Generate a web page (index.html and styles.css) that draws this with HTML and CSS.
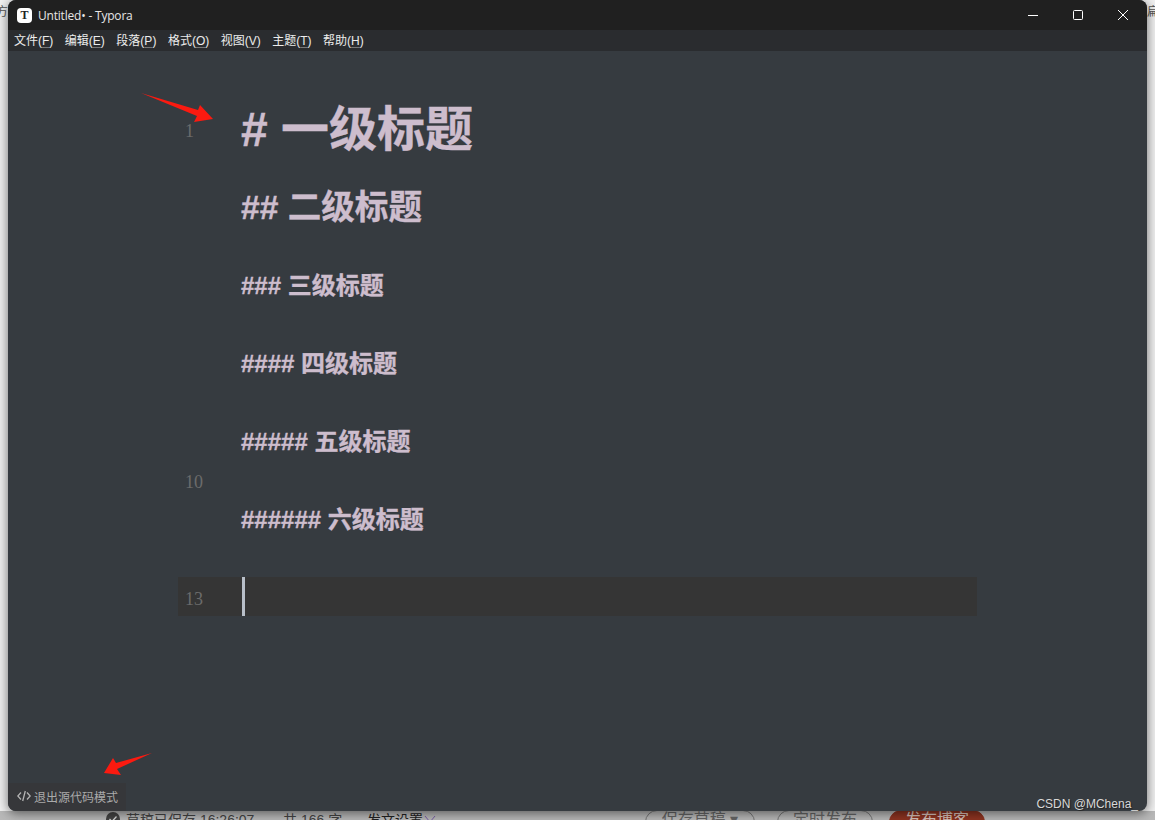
FILE: index.html
```html
<!DOCTYPE html>
<html lang="zh-CN">
<head>
<meta charset="utf-8">
<title>Untitled• - Typora</title>
<link rel="stylesheet" href="styles.css">
</head>
<body>
<div class="desk">
  <div class="back-top">
    <span class="back-left">方</span>
    <span class="back-right">扁</span>
  </div>
  <div class="back-foot">
    <span class="status-check"><svg width="14" height="14" viewBox="0 0 14 14"><path d="M3.5 7l2.5 2.5 4.5-5" stroke="#ddd" stroke-width="1.3" fill="none"/></svg></span>
    <span class="foot-saved">草稿已保存 16:26:07</span>
    <span class="foot-count">共 166 字</span>
    <span class="foot-set">发文设置<svg class="chev" width="12" height="12" viewBox="0 0 12 12"><path d="M1 3l5 6 5-6" stroke="#7a5ea8" fill="none"/></svg></span>
    <span class="foot-btn foot-draft">保存草稿 ▾</span>
    <span class="foot-btn foot-time">定时发布</span>
    <span class="foot-btn foot-pub">发布博客</span>
  </div>

  <div class="window">
    <header class="titlebar">
      <span class="app-icon">T</span>
      <span class="title">Untitled• - Typora</span>
      <div class="controls">
        <button class="ctl"><svg width="12" height="12" viewBox="0 0 12 12"><path d="M1 6.5h10" stroke="#fff" fill="none"/></svg></button>
        <button class="ctl"><svg width="12" height="12" viewBox="0 0 12 12"><rect x="1.5" y="1.5" width="9" height="9" rx="1" stroke="#fff" fill="none"/></svg></button>
        <button class="ctl"><svg width="12" height="12" viewBox="0 0 12 12"><path d="M1 1l10 10M11 1L1 11" stroke="#fff" fill="none"/></svg></button>
      </div>
    </header>
    <nav class="menubar">
      <span>文件(<u>F</u>)</span>
      <span>编辑(<u>E</u>)</span>
      <span>段落(<u>P</u>)</span>
      <span>格式(<u>O</u>)</span>
      <span>视图(<u>V</u>)</span>
      <span>主题(<u>T</u>)</span>
      <span>帮助(<u>H</u>)</span>
    </nav>
    <main class="editor">
      <div class="code">
        <div class="line"><span class="num">1</span><span class="src h1"># 一级标题</span></div>
        <div class="line"></div>
        <div class="line"><span class="src h2">## 二级标题</span></div>
        <div class="line"></div>
        <div class="line"><span class="src h3">### 三级标题</span></div>
        <div class="line"></div>
        <div class="line"><span class="src h3">#### 四级标题</span></div>
        <div class="line"></div>
        <div class="line"><span class="src h3">##### 五级标题</span></div>
        <div class="line"><span class="num">10</span></div>
        <div class="line"><span class="src h3">###### 六级标题</span></div>
        <div class="line"></div>
        <div class="line active"><span class="num">13</span><span class="cursor"></span></div>
      </div>
    </main>
    <div class="source-toggle">
      <svg class="code-icon" width="14" height="12" viewBox="0 0 14 12"><path d="M4 2.5L.8 6 4 9.5M10 2.5L13.2 6 10 9.5M8.3 1L5.7 11" stroke="#b4b4b4" stroke-width="1.3" fill="none"/></svg>
      <span>退出源代码模式</span>
    </div>
    <span class="watermark">CSDN @MChena_</span>
  </div>

  <svg class="arrows" width="1155" height="820" viewBox="0 0 1155 820">
    <polygon points="141,93 198,110 200,105 213,119 194,122 197,116" fill="#fb1a10"/>
    <polygon points="152,753 116,763 113,758 104,773 121,775 117,769" fill="#fb1a10"/>
  </svg>
</div>
</body>
</html>
```
FILE: styles.css
```css
* { box-sizing: border-box; }
html, body { margin: 0; padding: 0; }
body { font-family: "Liberation Sans", "Noto Sans CJK SC", sans-serif; background: #f1f1f1; }
u { text-decoration-thickness: 1px; text-decoration-color: #777; text-underline-offset: 2px; }

.desk {
  position: relative;
  width: 1155px;
  height: 820px;
  overflow: hidden;
  background: #f1f1f1;
  display: flex;
  flex-direction: column;
  justify-content: space-between;
}

.back-top {
  display: flex;
  justify-content: space-between;
  height: 20px;
  padding-top: 4px;
  font-size: 12px;
  line-height: 16px;
  color: #555;
}
.back-left { margin-left: -4px; }
.back-right { margin-right: -4px; }

.back-foot {
  display: flex;
  align-items: flex-start;
  height: 9px;
  overflow: hidden;
  font-size: 14px;
  line-height: 20px;
  color: #555;
  background: #b9b9b9;
  padding-left: 106px;
}
.status-check {
  width: 14px;
  height: 14px;
  margin-top: 1px;
  border-radius: 50%;
  background: #444;
  flex: none;
  display: flex;
}
.foot-saved { margin-left: 6px; margin-top: -1px; width: 157px; flex: none; color: #444; }
.foot-count { margin-top: -1px; width: 84px; flex: none; color: #444; }
.foot-set { margin-top: -1px; width: 278px; flex: none; color: #222; }
.chev { margin-left: 1px; }
.foot-btn {
  height: 24px;
  margin-top: -1px;
  border: 1px solid #777;
  border-radius: 12px;
  text-align: center;
  flex: none;
  font-size: 16px;
  line-height: 18px;
  color: #666;
}
.foot-draft { width: 110px; }
.foot-time { width: 96px; margin-left: 22px; }
.foot-pub { width: 96px; margin-left: 16px; background: #8f3421; border-color: #8f3421; color: #d9c4be; }

.window {
  position: absolute;
  left: 8px;
  top: 0;
  width: 1139px;
  height: 811px;
  display: flex;
  flex-direction: column;
  background: #363b40;
  border-radius: 8px;
  overflow: hidden;
  box-shadow: 0 2px 12px rgba(0, 0, 0, .55);
}

.titlebar {
  height: 30px;
  flex: none;
  display: flex;
  align-items: center;
  background: #202020;
  padding-left: 9px;
}
.app-icon {
  width: 15px;
  height: 15px;
  border-radius: 4px;
  background: #fff;
  color: #222;
  font: bold 12px/15px "Liberation Serif", serif;
  text-align: center;
  flex: none;
}
.title {
  margin-left: 6px;
  margin-top: 1px;
  font: 12px/16px "Open Sans", sans-serif;
  letter-spacing: -.2px;
  color: #e6e6e6;
}
.controls { margin-left: auto; display: flex; height: 100%; padding-right: 2px; }
.ctl {
  width: 45px;
  height: 30px;
  padding: 0;
  border: 0;
  background: transparent;
  display: flex;
  align-items: center;
  justify-content: center;
}

.menubar {
  height: 21px;
  flex: none;
  display: flex;
  align-items: center;
  gap: 11.5px;
  padding: 1px 0 0 6px;
  background: #2a2c2f;
  font-size: 12px;
  line-height: 16px;
  color: #ececec;
}

.editor {
  flex: 1;
  min-height: 0;
  padding-top: 58px;
  display: flex;
  justify-content: center;
}
.code { width: 799px; }
.line {
  height: 39px;
  position: relative;
  display: flex;
  align-items: center;
  padding-left: 64px;
}
.active { background: #353535; }
.num {
  position: absolute;
  left: 7px;
  top: 10px;
  font: 18px/24px "Liberation Serif", serif;
  color: #6b6b6b;
}
.src {
  margin: 1px 0 0 -1px;
  font-weight: 700;
  color: #cdbdcd;
  -webkit-text-stroke: .35px #cdbdcd;
  white-space: nowrap;
}
.h1 { font-size: 48px; line-height: 39px; }
.h2 { font-size: 33.6px; line-height: 39px; }
.h3 { font-size: 24px; line-height: 39px; }
.cursor { width: 3px; height: 39px; background: #b8bfc9; }

.source-toggle {
  position: absolute;
  left: 0;
  bottom: 0;
  width: 118px;
  height: 28px;
  display: flex;
  align-items: center;
  gap: 3px;
  padding: 0 0 2px 9px;
  background: #36373a;
  font-size: 12px;
  color: #aaa;
}
.code-icon { flex: none; }

.watermark {
  position: absolute;
  right: 9px;
  bottom: 0;
  font: 12px/13px "Liberation Sans", sans-serif;
  color: #d8d8d8;
  text-shadow: 1px 1px 1px #222;
}

.arrows { position: absolute; left: 0; top: 0; pointer-events: none; }
```
